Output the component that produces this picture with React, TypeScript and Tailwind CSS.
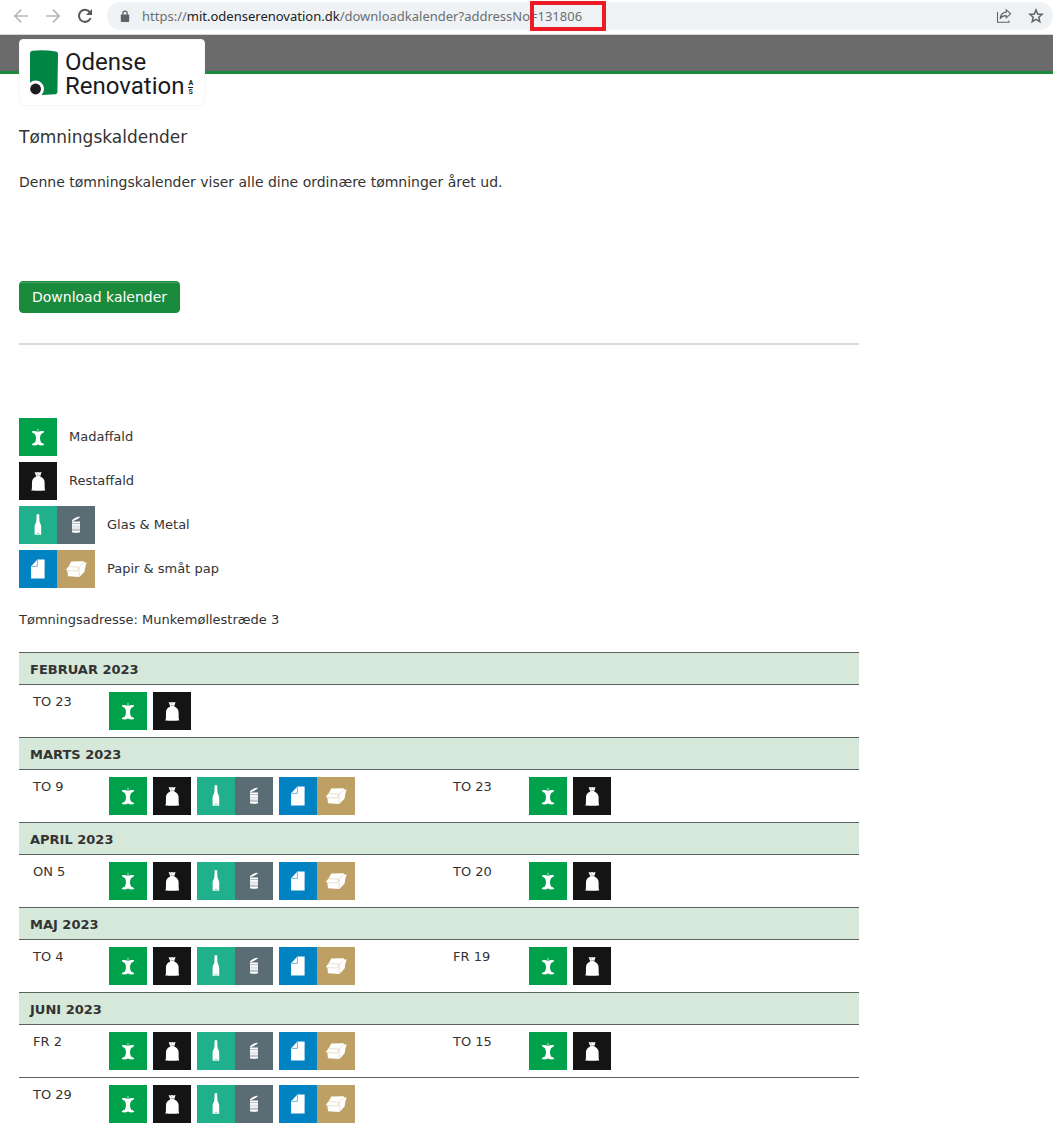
import React from "react";

type Waste = "food" | "rest" | "glass" | "paper";

function FoodIcon() {
  return (
    <svg viewBox="0 0 38 38" className="size-[38px] bg-[#00a14b]" aria-hidden="true">
      <path d="M19 14.6 V10.8" stroke="#b9e4cb" strokeWidth="1" fill="none" />
      <path
        d="M12.8 13.6 C14.8 12.8 17 13 19 14.2 C21 13 23.2 12.8 25.2 13.6 C24.8 15 23.4 15.6 22.2 15.9 C20.6 18.4 20.6 21.8 22.2 24.7 C23.6 25 25 25.6 25.4 27 C23.4 27.8 20.8 27.6 19 26.6 C17.2 27.6 14.6 27.8 12.6 27 C13 25.6 14.4 25 15.8 24.7 C17.4 21.8 17.4 18.4 15.8 15.9 C14.6 15.6 13.2 15 12.8 13.6 Z"
        fill="#fff"
      />
    </svg>
  );
}

function RestIcon() {
  return (
    <svg viewBox="0 0 38 38" className="size-[38px] bg-[#141414]" aria-hidden="true">
      <path
        d="M15.6 10 L17.6 10.6 L19 9.9 L20.6 10.6 L22.6 10 L21.6 13 L21.2 14.4 C24 15.4 25.5 17.2 25.6 20 L25.7 26.5 L26.2 28.6 C24.5 28.3 22.5 29.1 19.2 28.8 C16.6 29.1 14.5 28.3 12.3 28.7 L12.9 26.5 L13 20 C13.1 17.2 14.6 15.4 17.2 14.4 L16.7 13 Z"
        fill="#fff"
      />
      <path d="M17.4 13.8 L21.2 13.4 M18.6 11.2 L18.8 12.4" stroke="#777" strokeWidth="0.6" fill="none" />
    </svg>
  );
}

function BottleIcon() {
  return (
    <svg viewBox="0 0 38 38" className="size-[38px] bg-[#20b08c]" aria-hidden="true">
      <path
        d="M17.6 8.2 H20.2 V10.5 L20.5 15.6 C20.8 17.4 22.1 18.2 22.2 20.5 V28.2 Q22.2 28.8 21.6 28.8 H16.2 Q15.6 28.8 15.6 28.2 V20.5 C15.7 18.2 17 17.4 17.3 15.6 L17.6 10.5 Z"
        fill="#fff"
      />
      <path d="M17.3 28 Q19 26.2 20.7 28" stroke="#20b08c" strokeWidth="0.5" fill="none" />
    </svg>
  );
}

function CanIcon() {
  return (
    <svg viewBox="0 0 38 38" className="size-[38px] bg-[#5a6d75]" aria-hidden="true">
      <path d="M15 14.6 C15.6 12.8 20.5 10.4 23 10.8 C22.6 12.4 18.4 14.2 15.4 15.4 Z" fill="#fff" />
      <path d="M15 15.6 H23 V26.2 Q19 27.4 15 26.2 Z" fill="#fff" />
      <path d="M15 17.6 H23" stroke="#9aa6ab" strokeWidth="0.8" />
      <path d="M15 20.2 H23" stroke="#c3cbce" strokeWidth="0.8" />
      <path d="M15 22 H23" stroke="#c3cbce" strokeWidth="0.8" />
      <path d="M15 24 H23" stroke="#73848b" strokeWidth="0.9" />
    </svg>
  );
}

function PaperIcon() {
  return (
    <svg viewBox="0 0 38 38" className="size-[38px] bg-[#0082c3]" aria-hidden="true">
      <path d="M18.4 9.4 H25.6 V28.4 H12.1 V16.2 Z" fill="#fff" />
      <path d="M12.8 16.4 H18.4 V10" stroke="#4aa7d6" strokeWidth="0.8" fill="none" />
    </svg>
  );
}

function BoxIcon() {
  return (
    <svg viewBox="0 0 38 38" className="size-[38px] bg-[#bea064]" aria-hidden="true">
      <path
        d="M14.2 11.4 L26.6 11.2 L27.4 12.4 L29.6 12.6 L28.4 16.4 L27.6 21.6 L22.4 27 L11 26.2 L10.4 21 L8.9 19.8 L12 15.8 Z"
        fill="#fff"
      />
      <path
        d="M12 16.6 L22 17.2 L26.6 12.8 M22 17.4 L22.4 26.8 M10.4 20.6 L20.4 21 L22 17.6"
        stroke="#dccba8"
        strokeWidth="0.6"
        fill="none"
      />
    </svg>
  );
}

const wasteLabels: Record<Waste, string> = {
  food: "Madaffald",
  rest: "Restaffald",
  glass: "Glas & Metal",
  paper: "Papir & småt pap",
};

function WasteIcon({ kind }: { kind: Waste }) {
  return (
    <span className="flex shrink-0" role="img" aria-label={wasteLabels[kind]}>
      {kind === "food" && <FoodIcon />}
      {kind === "rest" && <RestIcon />}
      {kind === "glass" && (
        <>
          <BottleIcon />
          <CanIcon />
        </>
      )}
      {kind === "paper" && (
        <>
          <PaperIcon />
          <BoxIcon />
        </>
      )}
    </span>
  );
}

type Pickup = { day: string; kinds: Waste[] };
const all: Waste[] = ["food", "rest", "glass", "paper"];
const basic: Waste[] = ["food", "rest"];

const months: { name: string; rows: Pickup[][] }[] = [
  { name: "FEBRUAR 2023", rows: [[{ day: "TO 23", kinds: basic }]] },
  { name: "MARTS 2023", rows: [[{ day: "TO 9", kinds: all }, { day: "TO 23", kinds: basic }]] },
  { name: "APRIL 2023", rows: [[{ day: "ON 5", kinds: all }, { day: "TO 20", kinds: basic }]] },
  { name: "MAJ 2023", rows: [[{ day: "TO 4", kinds: all }, { day: "FR 19", kinds: basic }]] },
  {
    name: "JUNI 2023",
    rows: [[{ day: "FR 2", kinds: all }, { day: "TO 15", kinds: basic }], [{ day: "TO 29", kinds: all }]],
  },
];

function BrowserBar() {
  return (
    <div className="flex h-[35px] items-start border-b border-[#d5d7da] bg-white pt-[2px]">
      <div className="flex h-7 w-[107px] shrink-0 items-center gap-4 pl-[13px]">
        <button type="button" aria-label="Tilbage" className="text-[#b5b7ba]">
          <svg viewBox="0 0 16 16" className="size-4" fill="none" stroke="currentColor" strokeWidth="1.7">
            <path d="M15 8 H2 M8.2 1.6 L1.8 8 L8.2 14.4" />
          </svg>
        </button>
        <button type="button" aria-label="Frem" className="text-[#b5b7ba]">
          <svg viewBox="0 0 16 16" className="size-4" fill="none" stroke="currentColor" strokeWidth="1.7">
            <path d="M1 8 H14 M7.8 1.6 L14.2 8 L7.8 14.4" />
          </svg>
        </button>
        <button type="button" aria-label="Genindlæs" className="text-[#55585c]">
          <svg viewBox="0 0 16 16" className="size-4" fill="none" stroke="currentColor" strokeWidth="2">
            <path d="M13.6 10 A6 6 0 1 1 12.6 4" />
            <path d="M15 1 V7 H9 Z" fill="currentColor" stroke="none" />
          </svg>
        </button>
      </div>
      <div className="flex h-7 min-w-0 flex-1 items-center rounded-full bg-[#eef2f4] pr-[9px] pl-[13px]">
        <svg viewBox="0 0 10 13" className="h-[13px] w-[10px] shrink-0" aria-hidden="true">
          <rect x="0.8" y="4.4" width="8.4" height="7.6" rx="0.8" fill="#5f6368" />
          <path d="M2.8 5 V3.4 A2.2 2.2 0 0 1 7.2 3.4 V5" fill="none" stroke="#5f6368" strokeWidth="1.2" />
        </svg>
        <div
          role="textbox"
          tabIndex={0}
          aria-label="Adresse"
          className="ml-3 flex-1 font-['Noto_Sans',sans-serif] text-[13px] leading-5 whitespace-nowrap text-[#6a6e73]"
        >
          https://<span className="text-[#202124]">mit.odenserenovation.dk</span>/downloadkalender?addressNo=
          <span className="relative">
            131806
            <span className="absolute -top-[6px] -right-6 -left-2 h-[30px] border-4 border-[#ed1c24]" />
          </span>
        </div>
        <div className="flex items-center gap-4 text-[#5f6368]">
          <button type="button" aria-label="Del">
            <svg viewBox="0 0 16 16" className="size-4" fill="none" stroke="currentColor" strokeWidth="1.1">
              <path d="M1.5 4 V14.3 H13 V12.5" />
              <path d="M10.2 1.8 L14.6 5.8 L10.2 9.8 V7.6 C7.4 7.5 5.6 8.4 4.2 10.6 C4.5 7 6.4 4.5 10.2 4.1 Z" />
            </svg>
          </button>
          <button type="button" aria-label="Bogmærk">
            <svg viewBox="0 0 16 16" className="size-4" fill="none" stroke="currentColor" strokeWidth="1.5">
              <path d="M8 2 L9.7 6 L14.1 6.4 L10.8 9.3 L11.8 13.6 L8 11.3 L4.2 13.6 L5.2 9.3 L1.9 6.4 L6.3 6 Z" />
            </svg>
          </button>
        </div>
      </div>
    </div>
  );
}

function Logo() {
  return (
    <a
      href="#"
      aria-label="Odense Renovation A/S"
      className="absolute top-1 left-[19px] flex h-[67px] w-[186px] items-start rounded border border-[#f6f6f6] bg-white pt-[10px] pl-[10px] font-[Roboto,sans-serif] text-[#1b1b22]"
    >
      <svg viewBox="10 10 28 46" className="h-[46px] w-7 shrink-0" aria-hidden="true">
        <path
          d="M10 13.5 Q10 11 12.5 10.8 Q24 9.6 36 11.6 Q38 12 38 14 L37.4 52 Q37.4 54 35.5 54.2 L22 55 L10 45 Z"
          fill="#008542"
        />
        <circle cx="15.6" cy="49" r="8.4" fill="#fff" />
        <circle cx="15.6" cy="49" r="5.4" fill="#1b1b22" />
      </svg>
      <span className="ml-[7px] flex flex-col text-2xl leading-6">
        <span>Odense</span>
        <span>Renovation</span>
      </span>
      <span className="mt-[29px] ml-1 flex flex-col text-center text-[7px] leading-[8px] font-bold">
        <span className="border-b border-[#1b1b22]">A</span>
        <span>S</span>
      </span>
    </a>
  );
}

export default function App() {
  return (
    <div className="min-h-screen bg-white font-['DejaVu_Sans',Verdana,sans-serif] text-[13px] leading-5 text-[#333]">
      <BrowserBar />
      <header className="relative h-[39px] border-b-[3px] border-[#1a8a3c] bg-[#6b6b6b]">
        <Logo />
      </header>
      <main className="mx-[19px] max-w-[840px]">
        <h1 className="pt-[51px] text-[17px] leading-6">Tømningskaldender</h1>
        <p className="mt-[23px] text-sm leading-5">Denne tømningskalender viser alle dine ordinære tømninger året ud.</p>
        <button
          type="button"
          className="mt-[89px] block h-8 rounded border border-[#1a8a3c] bg-[#1a8a3c] px-3 text-sm leading-5 text-white shadow-[inset_0_1px_0_rgba(255,255,255,0.2)]"
        >
          Download kalender
        </button>
        <hr className="mt-[30px] border-t-2 border-[#dcdcdc]" />
        <ul className="mt-[73px] flex flex-col gap-[6px]">
          {all.map((kind) => (
            <li key={kind} className="flex items-center gap-3">
              <WasteIcon kind={kind} />
              <span>{wasteLabels[kind]}</span>
            </li>
          ))}
        </ul>
        <p className="mt-[22px]">Tømningsadresse: Munkemøllestræde 3</p>
        <table className="mt-[22px] w-full table-fixed border-separate border-spacing-0">
          <colgroup>
            <col className="w-[90px]" />
            <col />
            <col className="w-[90px]" />
            <col />
          </colgroup>
          {months.map((month) => (
            <tbody key={month.name}>
              <tr>
                <th
                  colSpan={4}
                  scope="colgroup"
                  className="h-8 border-t border-[#5c635e] bg-[#d6e8d9] p-0 pt-[2px] pl-[11px] text-left font-bold"
                >
                  {month.name}
                </th>
              </tr>
              {month.rows.map((row) => (
                <tr key={row[0].day}>
                  {[0, 1].map((i) => (
                    <React.Fragment key={i}>
                      <td className="border-t border-[#5c635e] p-0 pt-[7px] pl-[14px] align-top">{row[i]?.day}</td>
                      <td className="border-t border-[#5c635e] p-0 py-[7px]">
                        <div className="flex gap-[6px]">
                          {row[i]?.kinds.map((kind) => (
                            <WasteIcon key={kind} kind={kind} />
                          ))}
                        </div>
                      </td>
                    </React.Fragment>
                  ))}
                </tr>
              ))}
            </tbody>
          ))}
        </table>
      </main>
    </div>
  );
}
